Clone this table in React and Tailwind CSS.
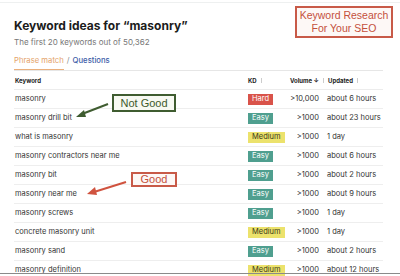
import React from "react";

const rows = [
  { kw: "masonry", kd: "Hard", vol: ">10,000", up: "about 6 hours" },
  { kw: "masonry drill bit", kd: "Easy", vol: ">1000", up: "about 23 hours" },
  { kw: "what is masonry", kd: "Medium", vol: ">1000", up: "1 day" },
  { kw: "masonry contractors near me", kd: "Easy", vol: ">1000", up: "about 6 hours" },
  { kw: "masonry bit", kd: "Easy", vol: ">1000", up: "about 2 hours" },
  { kw: "masonry near me", kd: "Easy", vol: ">1000", up: "about 9 hours" },
  { kw: "masonry screws", kd: "Easy", vol: ">1000", up: "1 day" },
  { kw: "concrete masonry unit", kd: "Medium", vol: ">1000", up: "1 day" },
  { kw: "masonry sand", kd: "Easy", vol: ">1000", up: "about 2 hours" },
  { kw: "masonry definition", kd: "Medium", vol: ">1000", up: "about 12 hours" },
];

const badgeStyles = {
  Hard: "bg-[#d9534a] text-white",
  Easy: "bg-[#4f9f8f] text-white",
  Medium: "bg-[#ece26c] text-[#3a3a1a]",
};

const Badge = ({ level }) => (
  <span className={`inline-flex h-[11px] items-center px-[4px] text-[7.5px] leading-none ${badgeStyles[level]}`}>
    {level}
  </span>
);

const App = () => {
  return (
    <div
      className="relative h-[276px] w-[400px] overflow-hidden bg-white"
      style={{ fontFamily: "Inter, 'Liberation Sans', sans-serif" }}
    >
      <div className="h-[3px] border-b border-[#eef0f0]" />
      <div className="px-[14px] pt-[15px]">
        <h1 className="text-[12px] font-bold leading-[16px] text-[#1c1c1c]">
          Keyword ideas for “masonry”
        </h1>
        <p className="mt-[3px] text-[8px] leading-[10px] text-[#777]">
          The first 20 keywords out of 50,362
        </p>
        <div className="mt-[8px] flex w-[369px] items-end border-b border-[#e6e6e6] text-[7.7px] leading-[12px]">
          <span className="border-b border-[#eab07c] pb-[2px] text-[#e4a36a]">Phrase match</span>
          <span className="px-[3px] pb-[3px] text-[#888]">/</span>
          <span className="pb-[3px] font-medium text-[#3c5ca8]">Questions</span>
        </div>

        <div className="w-[369px]">
          <div className="grid h-[19px] grid-cols-[234px_39px_32px_64px] items-center border-b border-[#ececec] text-[6px] font-bold text-[#222]">
            <span className="pl-[1px]">Keyword</span>
            <span className="flex items-center gap-[4px]">
              KD <span className="h-[5px] w-px bg-[#ccc]" />
            </span>
            <span className="whitespace-nowrap text-right">Volume ↓</span>
            <span className="flex items-center gap-[4px] pl-[4px]">
              <span className="h-[5px] w-px bg-[#ccc]" /> Updated <span className="h-[5px] w-px bg-[#ccc]" />
            </span>
          </div>
          {rows.map((r) => (
            <div
              key={r.kw}
              className="grid h-[19px] grid-cols-[234px_39px_32px_64px] items-center border-b border-[#eeeeee] text-[7.5px] text-[#333]"
            >
              <span className="pl-[1px]">{r.kw}</span>
              <span>
                <Badge level={r.kd} />
              </span>
              <span className="whitespace-nowrap text-right">{r.vol}</span>
              <span className="whitespace-nowrap pl-[8px]">{r.up}</span>
            </div>
          ))}
        </div>
      </div>

      <div className="absolute bottom-[2px] left-0 h-px w-[400px] bg-[#8a8a8a]" />

      {/* annotations */}
      <div
        className="absolute left-[295px] top-[6px] flex h-[32px] w-[98px] flex-col items-center justify-center border-2 border-[#c85a48] bg-[#fdf8f6] text-[10.5px] leading-[13px] text-[#c4503c]"
        style={{ fontFamily: "'Liberation Sans', Arial, sans-serif" }}
      >
        <span>Keyword Research</span>
        <span>For Your SEO</span>
      </div>
      <div
        className="absolute left-[112px] top-[94px] flex h-[18px] w-[64px] items-center justify-center border-2 border-[#3f5c30] bg-[#f7f9f2] text-[11px] text-[#3d5a2c]"
        style={{ fontFamily: "'Liberation Sans', Arial, sans-serif" }}
      >
        Not Good
      </div>
      <div
        className="absolute left-[131px] top-[172px] flex h-[15px] w-[46px] items-center justify-center border-2 border-[#c85a48] bg-[#fdf8f6] text-[11px] text-[#c4503c]"
        style={{ fontFamily: "'Liberation Sans', Arial, sans-serif" }}
      >
        Good
      </div>
      <svg className="absolute left-0 top-0" width="400" height="276">
        <line x1="108" y1="104" x2="82" y2="114" stroke="#3f5c30" strokeWidth="2" />
        <polygon points="76,117 84,110 86,117" fill="#3f5c30" />
        <line x1="126" y1="182" x2="94" y2="192" stroke="#d0533f" strokeWidth="2" />
        <polygon points="87,194 95,187 97,195" fill="#d0533f" />
      </svg>
    </div>
  );
};

export default App;
